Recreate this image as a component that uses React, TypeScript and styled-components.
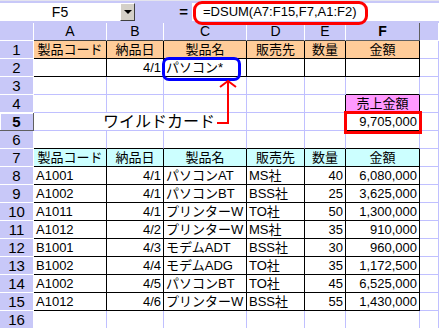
import styled, { createGlobalStyle } from 'styled-components';

const GlobalStyle = createGlobalStyle`
  html, body {
    margin: 0;
    padding: 0;
    background: #ffffff;
  }
  body {
    font-family: "Liberation Sans", "Noto Sans CJK JP", sans-serif;
  }
`;

const LAVENDER = '#c8c8f8';
const GRID = '#c0c0ff';
const INK = '#000000';
const COLS = [34, 73, 57, 83, 58, 41, 74, 19];
const LETTERS = ['A', 'B', 'C', 'D', 'E', 'F', ''];

type Align = 'left' | 'right' | 'center';
type CellData = { t: string; a: Align };

const HEAD = ['製品コード', '納品日', '製品名', '販売先', '数量', '金額'];

const DATA: string[][] = [
  ['A1001', '4/1', 'パソコンAT', 'MS社', '40', '6,080,000'],
  ['A1002', '4/1', 'パソコンBT', 'BSS社', '25', '3,625,000'],
  ['A1011', '4/1', 'プリンターW', 'TO社', '50', '1,300,000'],
  ['A1012', '4/2', 'プリンターW', 'MS社', '35', '910,000'],
  ['B1001', '4/3', 'モデムADT', 'BSS社', '30', '960,000'],
  ['B1002', '4/4', 'モデムADG', 'TO社', '35', '1,172,500'],
  ['A1002', '4/5', 'パソコンBT', 'TO社', '45', '6,525,000'],
  ['A1012', '4/6', 'プリンターW', 'BSS社', '55', '1,430,000'],
];
const DATA_ALIGN: Align[] = ['left', 'right', 'left', 'left', 'right', 'right'];

// cells that carry black borders (criteria range, result, database)
const inTable = (r: number, c: number) =>
  (c >= 0 && c <= 5 && ((r >= 1 && r <= 2) || (r >= 7 && r <= 15))) ||
  (c === 5 && (r === 4 || r === 5));

const fillOf = (r: number, c: number) => {
  if (r === 1 && c <= 5) return '#ffcc99';
  if (r === 7 && c <= 5) return '#ccffff';
  if (r === 4 && c === 5) return '#ff99ff';
  return '#ffffff';
};

const cellOf = (r: number, c: number): CellData => {
  if ((r === 1 || r === 7) && c <= 5) return { t: HEAD[c], a: 'center' };
  if (r === 2 && c === 1) return { t: '4/1', a: 'right' };
  if (r === 2 && c === 2) return { t: 'パソコン*', a: 'left' };
  if (r === 4 && c === 5) return { t: '売上金額', a: 'center' };
  if (r === 5 && c === 5) return { t: '9,705,000', a: 'right' };
  if (r >= 8 && r <= 15 && c <= 5) return { t: DATA[r - 8][c], a: DATA_ALIGN[c] };
  return { t: '', a: 'left' };
};

const Window = styled.div`
  position: relative;
  width: 439px;
  height: 328px;
  overflow: hidden;
  background: #ffffff;
  color: #000000;
`;

const FormulaBar = styled.div`
  display: flex;
  align-items: flex-start;
  height: 23px;
  padding-top: 2px;
  box-sizing: border-box;
  background: ${LAVENDER};
  border-top: 1px solid #e4e4ee;
`;

const NameBox = styled.div`
  width: 120px;
  height: 18px;
  line-height: 18px;
  background: #ffffff;
  text-align: center;
  font-size: 14px;
`;

const DropButton = styled.div`
  display: flex;
  align-items: center;
  justify-content: center;
  width: 15px;
  height: 18px;
  box-sizing: border-box;
  background: #d4d0c8;
  border-top: 1px solid #ffffff;
  border-left: 1px solid #ffffff;
  border-right: 1px solid #404040;
  border-bottom: 1px solid #404040;
`;

const Caret = styled.span`
  width: 0;
  height: 0;
  border-left: 4px solid transparent;
  border-right: 4px solid transparent;
  border-top: 4px solid #000000;
`;

const Equals = styled.div`
  width: 57px;
  height: 18px;
  line-height: 18px;
  text-align: right;
  padding-right: 4px;
  box-sizing: border-box;
  font-size: 15px;
  font-weight: bold;
`;

const FormulaText = styled.div`
  flex: 1;
  height: 18px;
  line-height: 18px;
  padding-left: 11px;
  background: #ffffff;
  font-size: 13px;
  white-space: nowrap;
`;

const Sheet = styled.div`
  display: grid;
  grid-template-columns: ${COLS.map((w) => `${w}px`).join(' ')};
  grid-auto-rows: 18px;
  font-size: 13px;
`;

const Corner = styled.div`
  background: ${LAVENDER};
  border-right: 1px solid #ffffff;
  border-bottom: 1px solid #ffffff;
`;

const ColHead = styled.div<{ $active?: boolean; $dark?: boolean }>`
  background: ${LAVENDER};
  text-align: center;
  line-height: 17px;
  font-size: 14px;
  font-weight: ${(p) => (p.$active ? 'bold' : 'normal')};
  border-right: 1px solid ${(p) => (p.$active ? '#606060' : '#ffffff')};
  border-bottom: 1px solid ${(p) => (p.$active ? '#606060' : p.$dark ? '#404040' : '#ffffff')};
  box-sizing: border-box;
`;

const RowHead = styled.div<{ $active?: boolean }>`
  background: ${LAVENDER};
  text-align: center;
  line-height: 17px;
  font-size: 15px;
  font-weight: ${(p) => (p.$active ? 'bold' : 'normal')};
  border-right: 1px solid ${(p) => (p.$active ? '#606060' : '#ffffff')};
  border-bottom: 1px solid ${(p) => (p.$active ? '#606060' : '#ffffff')};
  box-shadow: ${(p) => (p.$active ? 'inset 1px 1px 0 #ffffff' : 'none')};
  box-sizing: border-box;
`;

const Cell = styled.div<{ $align: Align; $bg: string; $rb: string; $bb: string }>`
  background: ${(p) => p.$bg};
  text-align: ${(p) => p.$align};
  line-height: 17px;
  padding: 0 2px;
  white-space: nowrap;
  overflow: hidden;
  border-right: 1px solid ${(p) => p.$rb};
  border-bottom: 1px solid ${(p) => p.$bb};
  box-sizing: border-box;
`;

const Label = styled.div`
  grid-column: span 3;
  text-align: right;
  padding-right: 31px;
  line-height: 18px;
  font-size: 16px;
  border-bottom: 1px solid ${GRID};
  border-right: 1px solid ${GRID};
  box-sizing: border-box;
  background: #ffffff;
`;

const Mark = styled.div<{ $color: string; $round: number }>`
  position: absolute;
  border: 3px solid ${(p) => p.$color};
  border-radius: ${(p) => p.$round}px;
  box-sizing: border-box;
  pointer-events: none;
`;

const FormulaMark = styled(Mark)`
  left: 193px;
  top: 1px;
  width: 175px;
  height: 24px;
`;

const WildMark = styled(Mark)`
  left: 162px;
  top: 57px;
  width: 79px;
  height: 24px;
`;

const ResultMark = styled(Mark)`
  left: 344px;
  top: 111px;
  width: 78px;
  height: 23px;
`;

const Arrow = styled.svg`
  position: absolute;
  left: 210px;
  top: 76px;
  overflow: visible;
`;

const App = () => {
  const rows = Array.from({ length: 16 }, (_, i) => i + 1);
  return (
    <>
      <GlobalStyle />
      <Window>
        <FormulaBar>
          <NameBox>F5</NameBox>
          <DropButton>
            <Caret />
          </DropButton>
          <Equals>=</Equals>
          <FormulaText>=DSUM(A7:F15,F7,A1:F2)</FormulaText>
        </FormulaBar>
        <Sheet>
          <Corner />
          {LETTERS.map((l, c) => (
            <ColHead key={c} $active={l === 'F'} $dark={c <= 5}>
              {l}
            </ColHead>
          ))}
          {rows.map((r) => [
            <RowHead key={`h${r}`} $active={r === 5}>
              {r}
            </RowHead>,
            ...(r === 5 ? [<Label key="label">ワイルドカード</Label>] : []),
            ...LETTERS.map((_, c) => {
              if (r === 5 && c <= 2) return null;
              const d = cellOf(r, c);
              const rb = inTable(r, c) || inTable(r, c + 1) ? INK : GRID;
              const bb = inTable(r, c) || inTable(r + 1, c) ? INK : GRID;
              return (
                <Cell key={`${r}-${c}`} $align={d.a} $bg={fillOf(r, c)} $rb={rb} $bb={bb}>
                  {d.t}
                </Cell>
              );
            }),
          ])}
        </Sheet>
        <FormulaMark $color="#ff0000" $round={9} />
        <WildMark $color="#0000ff" $round={7} />
        <ResultMark $color="#ff0000" $round={0} />
        <Arrow width="30" height="50" viewBox="0 0 30 50">
          <path d="M7 47 H18 V6" fill="none" stroke="#ff0000" strokeWidth="2" />
          <path d="M10 11 L18 5 L26 11" fill="none" stroke="#ff0000" strokeWidth="2" />
        </Arrow>
      </Window>
    </>
  );
};

export default App;
